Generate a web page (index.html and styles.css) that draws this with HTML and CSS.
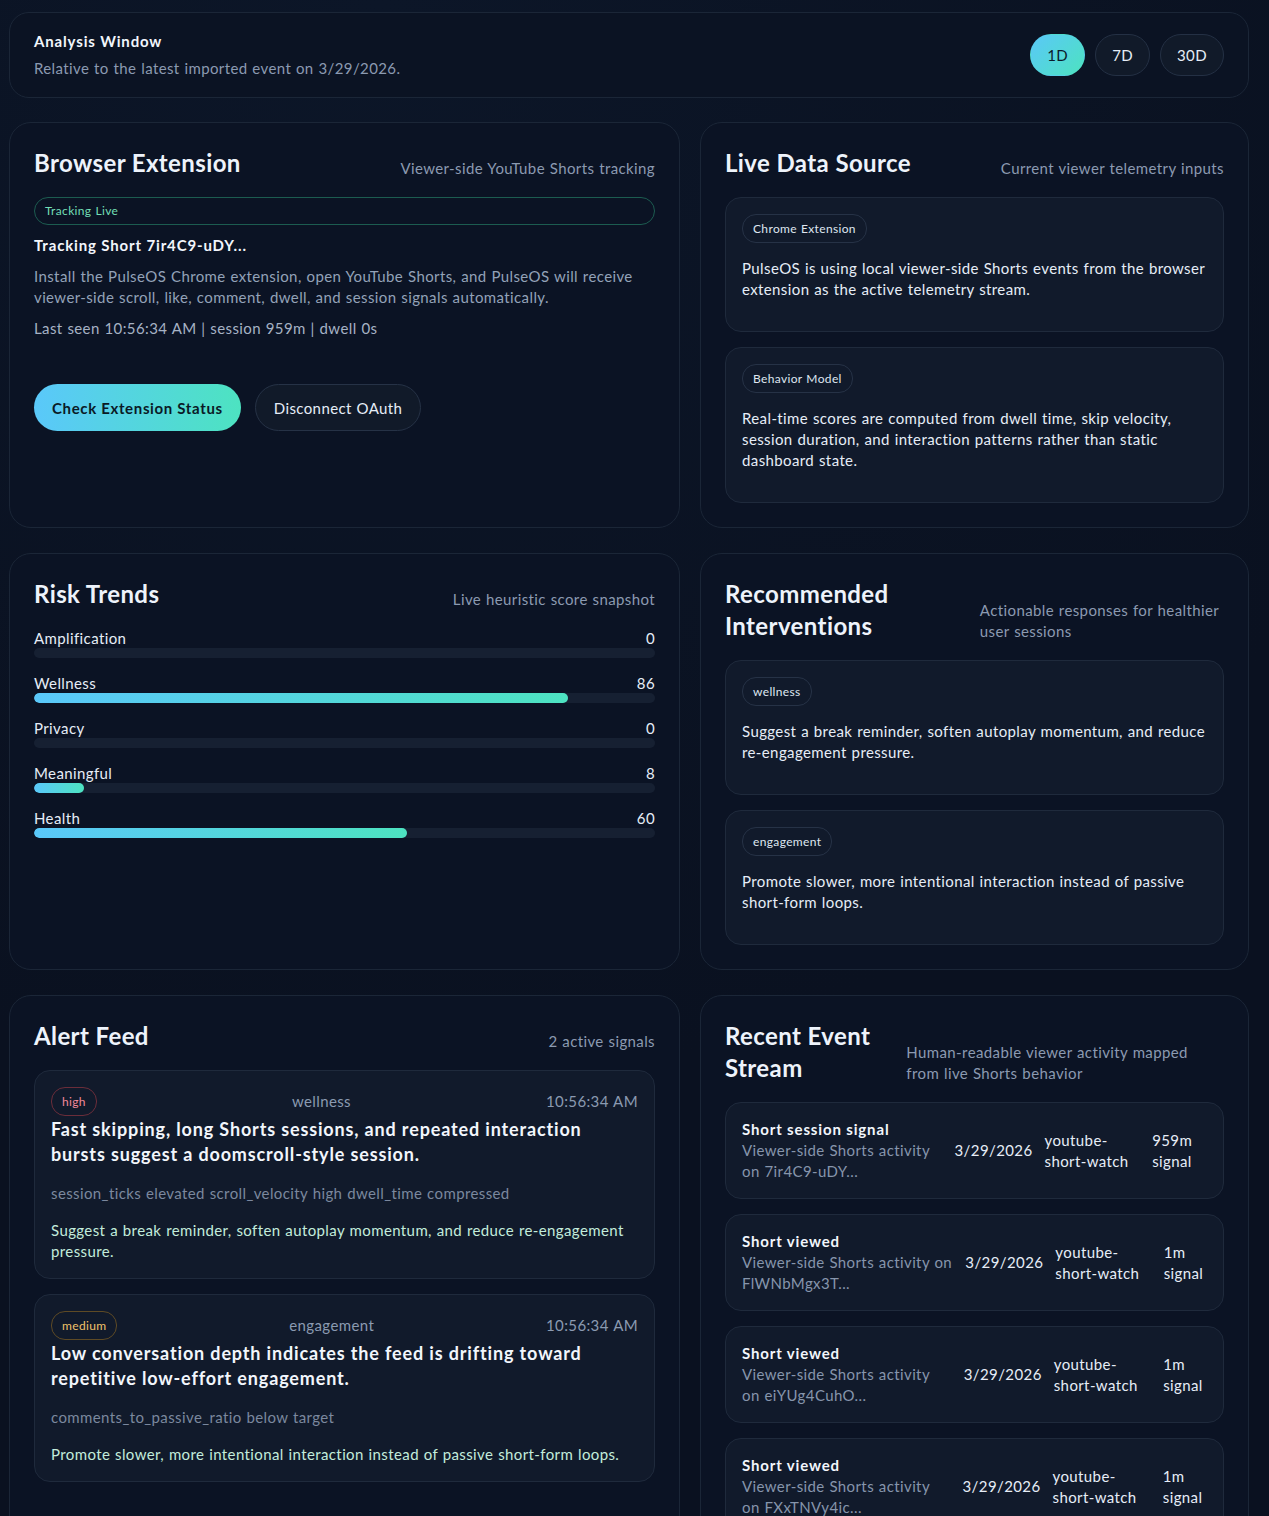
FILE: index.html
```html
<!DOCTYPE html>
<html lang="en">
<head>
    <meta charset="UTF-8">
    <meta name="viewport" content="width=device-width, initial-scale=1">
    <title>PulseOS</title>
    <link rel="stylesheet" href="styles.css">
</head>
<body>
    <main class="page">
        <!-- 分析窗口 -->
        <section class="window-bar">
            <div>
                <h3 class="window-title">Analysis Window</h3>
                <p class="window-note">Relative to the latest imported event on 3/29/2026.</p>
            </div>
            <div class="range-switch">
                <button class="range-btn active">1D</button>
                <button class="range-btn">7D</button>
                <button class="range-btn">30D</button>
            </div>
        </section>

        <div class="grid">
            <!-- 浏览器扩展 -->
            <section class="card">
                <div class="card-head">
                    <h2>Browser Extension</h2>
                    <span class="card-sub">Viewer-side YouTube Shorts tracking</span>
                </div>
                <div class="status-pill">Tracking Live</div>
                <p class="ext-title">Tracking Short 7ir4C9-uDY...</p>
                <p class="ext-copy">Install the PulseOS Chrome extension, open YouTube Shorts, and PulseOS will receive viewer-side scroll, like, comment, dwell, and session signals automatically.</p>
                <p class="ext-meta">Last seen 10:56:34 AM | session 959m | dwell 0s</p>
                <div class="actions">
                    <button class="btn btn-primary">Check Extension Status</button>
                    <button class="btn btn-ghost">Disconnect OAuth</button>
                </div>
            </section>

            <!-- 数据源 -->
            <section class="card">
                <div class="card-head">
                    <h2>Live Data Source</h2>
                    <span class="card-sub">Current viewer telemetry inputs</span>
                </div>
                <div class="stack">
                    <div class="panel">
                        <span class="tag">Chrome Extension</span>
                        <p>PulseOS is using local viewer-side Shorts events from the browser extension as the active telemetry stream.</p>
                    </div>
                    <div class="panel">
                        <span class="tag">Behavior Model</span>
                        <p>Real-time scores are computed from dwell time, skip velocity, session duration, and interaction patterns rather than static dashboard state.</p>
                    </div>
                </div>
            </section>

            <!-- 风险趋势 -->
            <section class="card">
                <div class="card-head">
                    <h2>Risk Trends</h2>
                    <span class="card-sub">Live heuristic score snapshot</span>
                </div>
                <div class="trends">
                    <div class="trend">
                        <div class="trend-label"><span>Amplification</span><span>0</span></div>
                        <div class="track"><div class="fill" style="width: 0%"></div></div>
                    </div>
                    <div class="trend">
                        <div class="trend-label"><span>Wellness</span><span>86</span></div>
                        <div class="track"><div class="fill" style="width: 86%"></div></div>
                    </div>
                    <div class="trend">
                        <div class="trend-label"><span>Privacy</span><span>0</span></div>
                        <div class="track"><div class="fill" style="width: 0%"></div></div>
                    </div>
                    <div class="trend">
                        <div class="trend-label"><span>Meaningful</span><span>8</span></div>
                        <div class="track"><div class="fill" style="width: 8%"></div></div>
                    </div>
                    <div class="trend">
                        <div class="trend-label"><span>Health</span><span>60</span></div>
                        <div class="track"><div class="fill" style="width: 60%"></div></div>
                    </div>
                </div>
            </section>

            <!-- 建议干预 -->
            <section class="card">
                <div class="card-head">
                    <h2>Recommended Interventions</h2>
                    <span class="card-sub">Actionable responses for healthier user sessions</span>
                </div>
                <div class="stack">
                    <div class="panel">
                        <span class="tag">wellness</span>
                        <p>Suggest a break reminder, soften autoplay momentum, and reduce re-engagement pressure.</p>
                    </div>
                    <div class="panel">
                        <span class="tag">engagement</span>
                        <p>Promote slower, more intentional interaction instead of passive short-form loops.</p>
                    </div>
                </div>
            </section>

            <!-- 警报 -->
            <section class="card">
                <div class="card-head">
                    <h2>Alert Feed</h2>
                    <span class="card-sub">2 active signals</span>
                </div>
                <div class="stack">
                    <div class="panel alert">
                        <div class="alert-top">
                            <span class="tag sev-high">high</span>
                            <span>wellness</span>
                            <span>10:56:34 AM</span>
                        </div>
                        <h4>Fast skipping, long Shorts sessions, and repeated interaction bursts suggest a doomscroll-style session.</h4>
                        <p class="alert-meta">session_ticks elevated scroll_velocity high dwell_time compressed</p>
                        <p class="alert-fix">Suggest a break reminder, soften autoplay momentum, and reduce re-engagement pressure.</p>
                    </div>
                    <div class="panel alert">
                        <div class="alert-top">
                            <span class="tag sev-medium">medium</span>
                            <span>engagement</span>
                            <span>10:56:34 AM</span>
                        </div>
                        <h4>Low conversation depth indicates the feed is drifting toward repetitive low-effort engagement.</h4>
                        <p class="alert-meta">comments_to_passive_ratio below target</p>
                        <p class="alert-fix">Promote slower, more intentional interaction instead of passive short-form loops.</p>
                    </div>
                </div>
            </section>

            <!-- 事件流 -->
            <section class="card">
                <div class="card-head">
                    <h2>Recent Event Stream</h2>
                    <span class="card-sub">Human-readable viewer activity mapped from live Shorts behavior</span>
                </div>
                <div class="stack">
                    <div class="panel event">
                        <div class="event-main">
                            <strong>Short session signal</strong>
                            <span>Viewer-side Shorts activity on 7ir4C9-uDY...</span>
                        </div>
                        <span>3/29/2026</span>
                        <span>youtube-short-watch</span>
                        <span>959m signal</span>
                    </div>
                    <div class="panel event">
                        <div class="event-main">
                            <strong>Short viewed</strong>
                            <span>Viewer-side Shorts activity on FlWNbMgx3T...</span>
                        </div>
                        <span>3/29/2026</span>
                        <span>youtube-short-watch</span>
                        <span>1m signal</span>
                    </div>
                    <div class="panel event">
                        <div class="event-main">
                            <strong>Short viewed</strong>
                            <span>Viewer-side Shorts activity on eiYUg4CuhO...</span>
                        </div>
                        <span>3/29/2026</span>
                        <span>youtube-short-watch</span>
                        <span>1m signal</span>
                    </div>
                    <div class="panel event">
                        <div class="event-main">
                            <strong>Short viewed</strong>
                            <span>Viewer-side Shorts activity on FXxTNVy4ic...</span>
                        </div>
                        <span>3/29/2026</span>
                        <span>youtube-short-watch</span>
                        <span>1m signal</span>
                    </div>
                </div>
            </section>
        </div>
    </main>
</body>
</html>
```

FILE: styles.css
```css
body {
    font-family: "Segoe UI", Lato, "Noto Sans", sans-serif;
    font-size: 15px;
    line-height: 21px;
    letter-spacing: 0.39px;
    word-spacing: 0.6px;
    margin: 0;
    padding: 0;
    color: #e6edf7;
    background: radial-gradient(circle at 30% 0%, #0c1628 0%, #0a1120 60%) #0a1120;
    min-height: 100vh;
}

h2, h3, h4, p {
    margin: 0;
}

button {
    font-family: inherit;
    letter-spacing: inherit;
    word-spacing: inherit;
    cursor: pointer;
}

.page {
    width: 1240px;
    padding: 12px 0 40px 9px;
}

/* 顶部窗口 */
.window-bar {
    display: flex;
    justify-content: space-between;
    align-items: center;
    padding: 18px 24px;
    border: 1px solid #1b2637;
    border-radius: 20px;
    background-color: #0b1323;
}

.window-title {
    font-size: 15px;
    font-weight: 700;
    letter-spacing: 0.85px;
    word-spacing: 0;
    color: #f2f6fc;
}

.window-note {
    margin-top: 6px;
    color: #8b9ab1;
}

.range-switch {
    display: flex;
    gap: 10px;
}

.range-btn {
    height: 42px;
    padding: 0 16px;
    border-radius: 21px;
    border: 1px solid #243044;
    background-color: #111a29;
    color: #e6edf7;
    font-size: 15px;
}

.range-btn.active {
    border-color: transparent;
    background: linear-gradient(135deg, #5ac8f8, #4de3c0);
    color: #0b1a2a;
}

/* 卡片 */
.grid {
    display: grid;
    grid-template-columns: minmax(0, 671fr) minmax(0, 549fr);
    gap: 25px 20px;
    margin-top: 24px;
}

.card {
    padding: 24px;
    border: 1px solid #1b2637;
    border-radius: 22px;
    background-color: #0b1324;
}

.card-head {
    display: flex;
    justify-content: space-between;
    align-items: flex-end;
    gap: 24px;
    margin-bottom: 18px;
}

.card-head h2 {
    font-size: 24px;
    line-height: 32px;
    font-weight: 700;
    letter-spacing: 0.4px;
    word-spacing: 0;
    color: #eef3fb;
}

.card-sub {
    color: #8b9ab1;
}

.stack {
    display: flex;
    flex-direction: column;
    gap: 15px;
}

.panel {
    padding: 16px;
    border: 1px solid #1f2a3c;
    border-radius: 16px;
    background-color: #111a2b;
}

.panel p {
    margin: 15px 0;
    color: #e6edf7;
}

.tag {
    display: inline-flex;
    align-items: center;
    height: 27px;
    padding: 0 10px;
    border: 1px solid #263246;
    border-radius: 14px;
    font-size: 12px;
    letter-spacing: 0.35px;
    color: #dfe6f0;
}

/* 扩展 */
.status-pill {
    height: 26px;
    line-height: 26px;
    padding: 0 10px;
    border: 1px solid #1c5c50;
    border-radius: 14px;
    font-size: 12px;
    letter-spacing: 0.35px;
    color: #72dfb6;
}

.ext-title {
    margin-top: 10px;
    font-weight: 700;
    letter-spacing: 0.85px;
    word-spacing: 0;
    color: #f2f6fc;
}

.ext-copy {
    margin-top: 10px;
    color: #93a2b8;
}

.ext-meta {
    margin-top: 10px;
    color: #a6b2c4;
}

.actions {
    display: flex;
    gap: 14px;
    margin-top: 45px;
}

.btn {
    height: 47px;
    padding: 0 18px;
    border-radius: 24px;
    font-size: 15px;
}

.btn-primary {
    border: none;
    padding: 0 18px;
    background: linear-gradient(90deg, #5ac8fa, #4de3c1);
    color: #0a1a26;
    font-weight: 700;
    letter-spacing: 0.65px;
    word-spacing: 0;
}

.btn-ghost {
    border: 1px solid #263246;
    background-color: #111a29;
    color: #e6edf7;
}

/* 趋势 */
.trends {
    display: flex;
    flex-direction: column;
    gap: 15px;
}

.trend-label {
    display: flex;
    justify-content: space-between;
    line-height: 20px;
    color: #e6edf7;
}

.track {
    height: 10px;
    border-radius: 5px;
    background-color: #162032;
    overflow: hidden;
}

.fill {
    height: 100%;
    border-radius: 5px;
    background: linear-gradient(90deg, #5ac8fa, #4de3c1);
}

/* 警报 */
.alert-top {
    display: flex;
    justify-content: space-between;
    align-items: center;
    color: #8b9ab1;
}

.sev-high {
    border-color: #6b2d3a;
    color: #f3899a;
}

.sev-medium {
    border-color: #5e4a25;
    color: #f1c26a;
}

.alert h4 {
    margin-top: 1px;
    font-size: 18px;
    line-height: 25px;
    font-weight: 700;
    letter-spacing: 0.85px;
    word-spacing: 0;
    color: #f2f6fc;
}

.alert .alert-meta {
    margin: 16px 0 0;
    color: #7b889e;
}

.alert .alert-fix {
    margin: 16px 0 0;
    color: #c3ecdc;
}

/* 事件 */
.event {
    display: flex;
    align-items: center;
    gap: 12px;
}

.event-main {
    display: flex;
    flex-direction: column;
}

.event-main strong {
    letter-spacing: 0.85px;
    word-spacing: 0;
    color: #f2f6fc;
}

.event-main span {
    color: #8695ac;
}
```
